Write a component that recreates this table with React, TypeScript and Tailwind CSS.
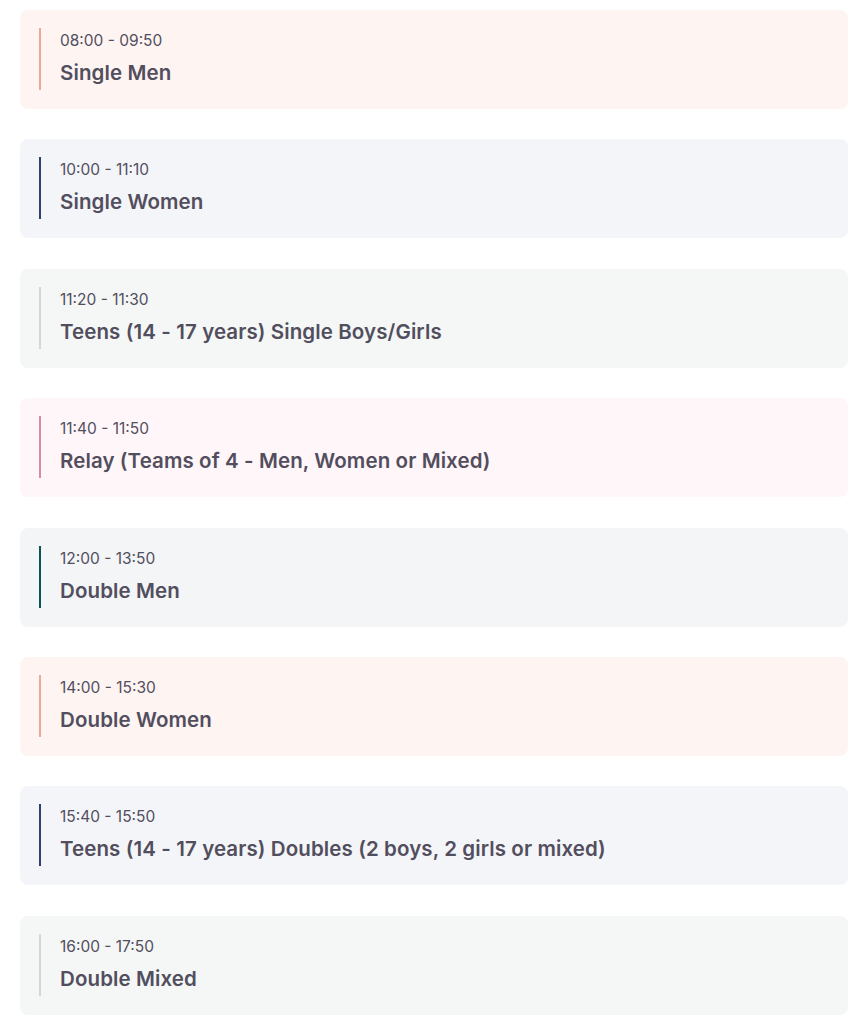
import React from "react";

// Agenda list: each slot is a tinted card with a coloured bar on the left.
const slots = [
  { time: "08:00 - 09:50", title: "Single Men", bg: "bg-[#fef5f3]", bar: "border-[#e9aa9b]" },
  { time: "10:00 - 11:10", title: "Single Women", bg: "bg-[#f4f5f8]", bar: "border-[#2f3f72]" },
  { time: "11:20 - 11:30", title: "Teens (14 - 17 years) Single Boys/Girls", bg: "bg-[#f4f7f6]", bar: "border-[#d2d6d4]" },
  { time: "11:40 - 11:50", title: "Relay (Teams of 4 - Men, Women or Mixed)", bg: "bg-[#fff6f9]", bar: "border-[#d98aab]" },
  { time: "12:00 - 13:50", title: "Double Men", bg: "bg-[#f3f5f7]", bar: "border-[#0b5556]" },
  { time: "14:00 - 15:30", title: "Double Women", bg: "bg-[#fef5f3]", bar: "border-[#e9aa9b]" },
  { time: "15:40 - 15:50", title: "Teens (14 - 17 years) Doubles (2 boys, 2 girls or mixed)", bg: "bg-[#f4f5f8]", bar: "border-[#2f3f72]" },
  { time: "16:00 - 17:50", title: "Double Mixed", bg: "bg-[#f4f7f6]", bar: "border-[#d2d6d4]" },
];

const App = () => {
  return (
    <div className="min-h-screen bg-white pt-[10px] pl-[20px] pr-[17px] font-['Inter',sans-serif] text-[#524e5e]">
      <div className="flex flex-col gap-[30.4px]">
        {slots.map((s) => (
          <div key={s.time} className={`rounded-lg px-[19px] pt-[18px] pb-[19px] ${s.bg}`}>
            {/* Time and title */}
            <div className={`flex flex-col border-l-2 pl-[19px] pb-[2px] ${s.bar}`}>
              <p className="text-[15.5px] leading-[25px]">{s.time}</p>
              <h3 className="mt-[5px] text-[20.5px] leading-[30px] font-semibold tracking-[0.1px]">{s.title}</h3>
            </div>
          </div>
        ))}
      </div>
    </div>
  );
};

export default App;
